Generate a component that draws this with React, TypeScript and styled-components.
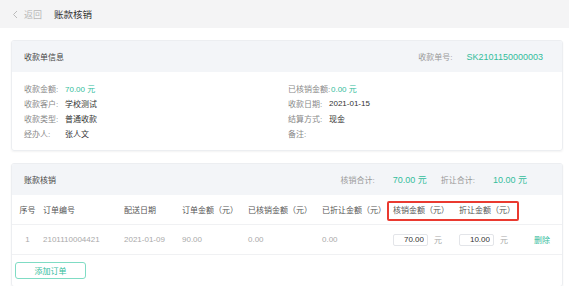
import React from 'react';
import styled, { createGlobalStyle } from 'styled-components';

const GlobalStyle = createGlobalStyle`
  html, body {
    margin: 0;
    padding: 0;
    background: #fff;
  }
  body {
    font-family: 'Liberation Sans', 'Noto Sans CJK SC', sans-serif;
    font-size: 8px;
    color: #333;
  }
  * {
    box-sizing: border-box;
  }
`;

const TEAL = '#33bd9c';

const TopBar = styled.div`
  height: 28px;
  background: #f4f4f5;
  display: flex;
  align-items: center;
  padding-left: 12px;
`;

const Back = styled.span`
  display: flex;
  align-items: center;
  gap: 6px;
  color: #b8b8b8;
  font-size: 9px;
  margin-right: 12px;
`;

const PageTitle = styled.span`
  font-size: 9.5px;
  color: #333;
`;

const Content = styled.div`
  padding: 12px 6px 0 11px;
  display: flex;
  flex-direction: column;
  gap: 12px;
`;

const Card = styled.div`
  border: 1px solid #eceef1;
  border-radius: 3px;
  box-shadow: 0 1px 2px rgba(0, 0, 0, 0.05);
  overflow: hidden;
`;

const CardHeader = styled.div`
  height: 31px;
  background: #f3f5f8;
  display: flex;
  align-items: center;
  padding: 0 12px;
`;

const CardTitle = styled.span`
  flex: 1;
  color: #444;
  font-size: 8px;
`;

const Meta = styled.span<{ $gap?: number }>`
  color: #999;
  margin-right: ${(p) => p.$gap ?? 14}px;
`;

const TealText = styled.span<{ $gap?: number }>`
  color: ${TEAL};
  font-size: 9px;
  margin-right: ${(p) => p.$gap ?? 0}px;
`;

const InfoGrid = styled.div`
  display: grid;
  grid-template-columns: 264px 1fr;
  padding: 9px 12px 9px;
`;

const InfoRow = styled.div`
  height: 15px;
  display: flex;
  align-items: center;
`;

const Label = styled.span<{ $w?: number }>`
  color: #888;
  min-width: ${(p) => p.$w ?? 41}px;
`;

const Value = styled.span<{ $accent?: boolean }>`
  color: ${(p) => (p.$accent ? TEAL : '#333')};
`;

const cols = '31px 81px 58px 66px 74px 71px 66px 75px 1fr';

const Row = styled.div<{ $head?: boolean }>`
  position: relative;
  display: grid;
  grid-template-columns: ${cols};
  height: 30px;
  align-items: center;
  border-bottom: 1px solid #f0f1f3;
  color: ${(p) => (p.$head ? '#555' : '#aaa')};
`;

const Cell = styled.div<{ $center?: boolean }>`
  white-space: nowrap;
  display: flex;
  align-items: center;
  justify-content: ${(p) => (p.$center ? 'center' : 'flex-start')};
`;

const Highlight = styled.div`
  position: absolute;
  left: 375px;
  top: 6px;
  width: 132px;
  height: 20px;
  border: 2px solid #ea3a30;
  border-radius: 2px;
  pointer-events: none;
`;

const AmountInput = styled.input`
  width: 35px;
  height: 12px;
  border: 1px solid #e3e5e9;
  border-radius: 2px;
  font-family: inherit;
  font-size: 8px;
  color: #333;
  text-align: right;
  padding: 0 3px;
  margin-right: 6px;
  outline: none;
`;

const Unit = styled.span`
  color: #aaa;
`;

const DeleteLink = styled.span`
  color: ${TEAL};
`;

const Footer = styled.div`
  height: 31px;
  display: flex;
  align-items: center;
  padding-left: 3px;
`;

const AddButton = styled.button`
  width: 71px;
  height: 17px;
  border: 1px solid #7fdcc4;
  border-radius: 3px;
  background: #fff;
  color: ${TEAL};
  font-family: inherit;
  font-size: 8px;
  cursor: pointer;
`;

const infoLeft = [
  { label: '收款金额:', value: '70.00 元', accent: true },
  { label: '收款客户:', value: '学校测试' },
  { label: '收款类型:', value: '普通收款' },
  { label: '经办人:', value: '张人文' },
];

const infoRight = [
  { label: '已核销金额:', value: '0.00 元', accent: true, w: 43 },
  { label: '收款日期:', value: '2021-01-15' },
  { label: '结算方式:', value: '现金' },
  { label: '备注:', value: '' },
];

const headers = ['订单编号', '配送日期', '订单金额（元）', '已核销金额（元）', '已折让金额（元）', '核销金额（元）', '折让金额（元）', ''];

const App = () => {
  return (
    <>
      <GlobalStyle />
      <TopBar>
        <Back>
          <svg width="6" height="9" viewBox="0 0 6 9">
            <path d="M5 1 L1.5 4.5 L5 8" fill="none" stroke="#bbb" strokeWidth="1" />
          </svg>
          返回
        </Back>
        <PageTitle>账款核销</PageTitle>
      </TopBar>
      <Content>
        <Card>
          <CardHeader>
            <CardTitle>收款单信息</CardTitle>
            <Meta $gap={14}>收款单号:</Meta>
            <TealText $gap={7}>SK2101150000003</TealText>
          </CardHeader>
          <InfoGrid>
            <div>
              {infoLeft.map((r) => (
                <InfoRow key={r.label}>
                  <Label>{r.label}</Label>
                  <Value $accent={r.accent}>{r.value}</Value>
                </InfoRow>
              ))}
            </div>
            <div>
              {infoRight.map((r) => (
                <InfoRow key={r.label}>
                  <Label $w={r.w}>{r.label}</Label>
                  <Value $accent={r.accent}>{r.value}</Value>
                </InfoRow>
              ))}
            </div>
          </InfoGrid>
        </Card>

        <Card>
          <CardHeader>
            <CardTitle>账款核销</CardTitle>
            <Meta $gap={18}>核销合计:</Meta>
            <TealText $gap={14}>70.00 元</TealText>
            <Meta $gap={18}>折让合计:</Meta>
            <TealText $gap={23}>10.00 元</TealText>
          </CardHeader>
          <Row $head>
            <Cell $center>序号</Cell>
            {headers.map((h, i) => (
              <Cell key={i}>{h}</Cell>
            ))}
            <Highlight />
          </Row>
          <Row>
            <Cell $center>1</Cell>
            <Cell>2101110004421</Cell>
            <Cell>2021-01-09</Cell>
            <Cell>90.00</Cell>
            <Cell>0.00</Cell>
            <Cell>0.00</Cell>
            <Cell>
              <AmountInput defaultValue="70.00" />
              <Unit>元</Unit>
            </Cell>
            <Cell>
              <AmountInput defaultValue="10.00" />
              <Unit>元</Unit>
            </Cell>
            <Cell>
              <DeleteLink>删除</DeleteLink>
            </Cell>
          </Row>
          <Footer>
            <AddButton>添加订单</AddButton>
          </Footer>
        </Card>
      </Content>
    </>
  );
};

export default App;
